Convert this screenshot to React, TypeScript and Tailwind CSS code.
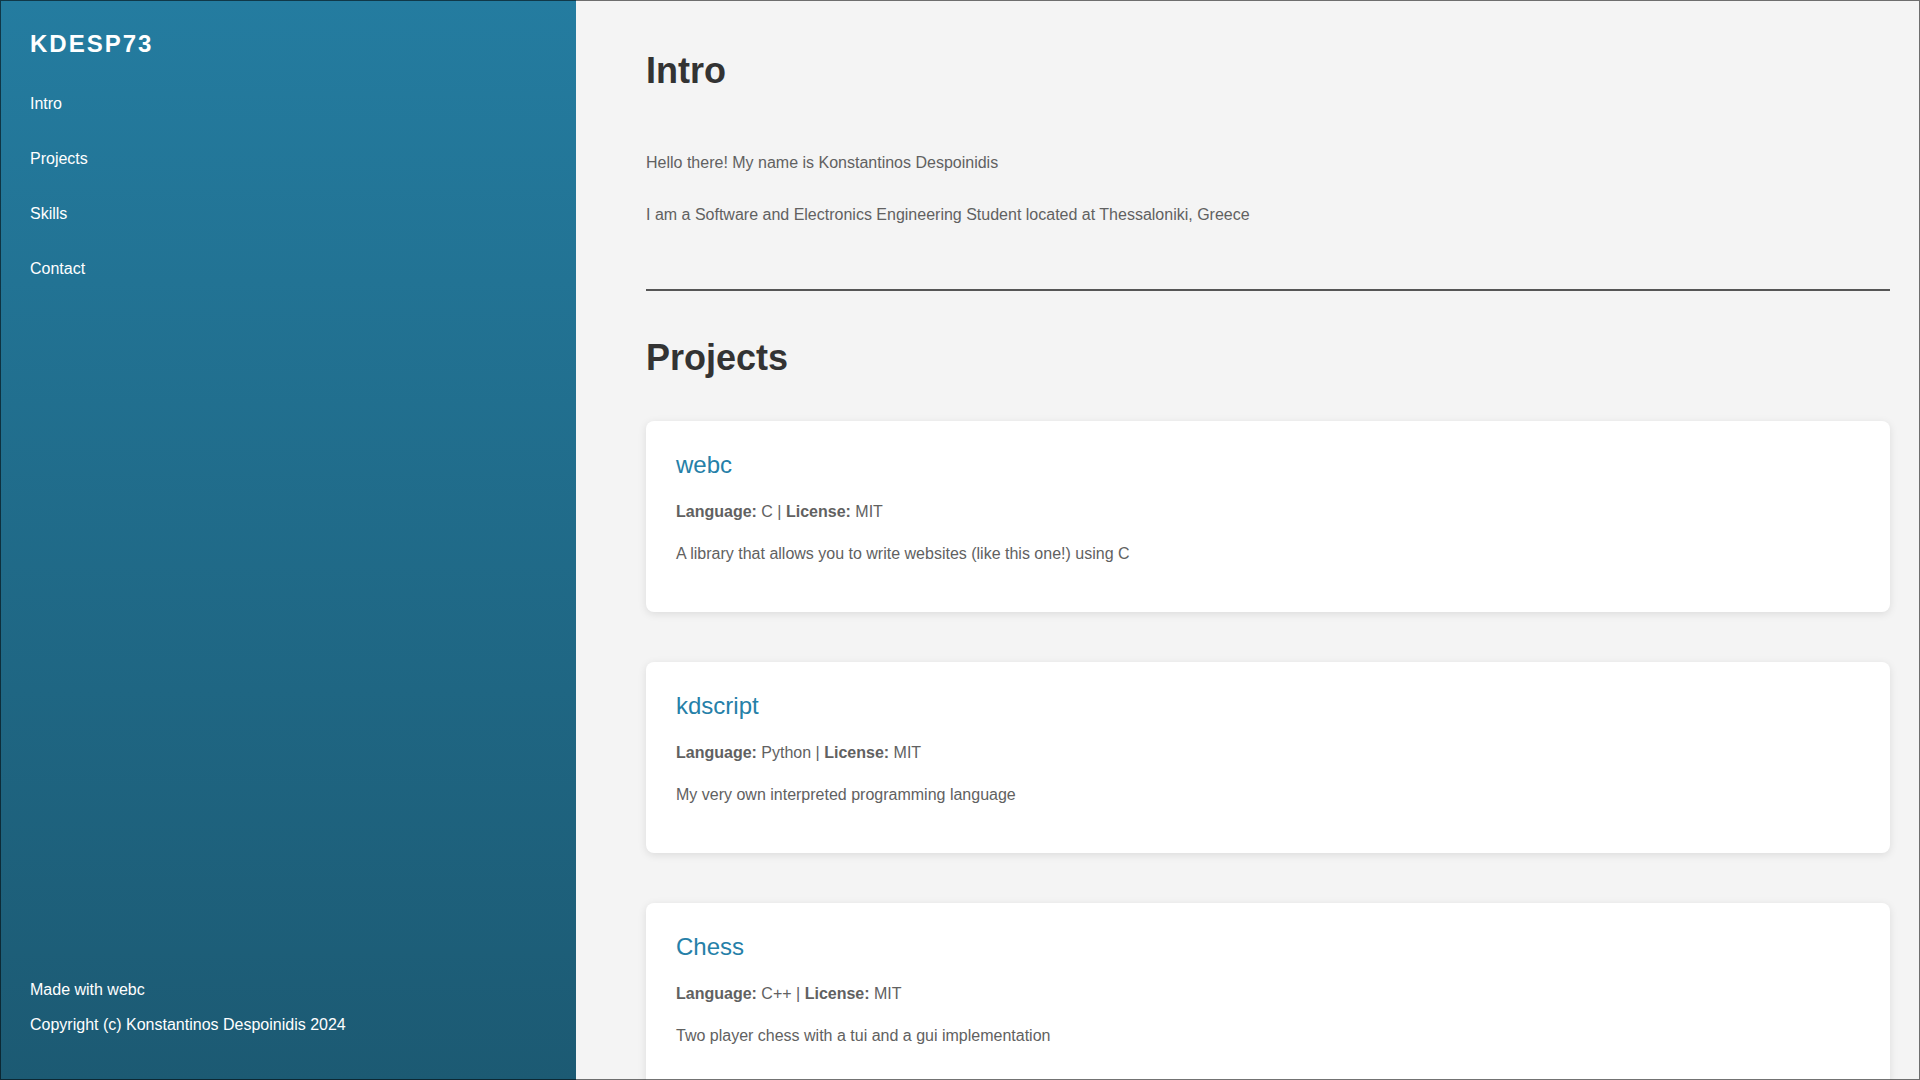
import React from 'react';

type Project = {
  name: string;
  language: string;
  license: string;
  description: string;
};

const projects: Project[] = [
  {
    name: 'webc',
    language: 'C',
    license: 'MIT',
    description: 'A library that allows you to write websites (like this one!) using C',
  },
  {
    name: 'kdscript',
    language: 'Python',
    license: 'MIT',
    description: 'My very own interpreted programming language',
  },
  {
    name: 'Chess',
    language: 'C++',
    license: 'MIT',
    description: 'Two player chess with a tui and a gui implementation',
  },
];

const navLinks = ['Intro', 'Projects', 'Skills', 'Contact'];

const ProjectCard = ({ project }: { project: Project }) => {
  return (
    <div className="mb-[50px] rounded-lg bg-white px-[30px] pt-[29px] pb-[46px] shadow-[0_2px_8px_rgba(0,0,0,0.1)]">
      <h3 className="text-[24px] leading-[29px] text-[#2580a8]">{project.name}</h3>
      <p className="mt-[21px] text-[16px] leading-[24px] text-[#616161]">
        <span className="font-bold">Language:</span> {project.language} |{' '}
        <span className="font-bold">License:</span> {project.license}
      </p>
      <p className="mt-[18px] text-[16px] leading-[24px] text-[#616161]">{project.description}</p>
    </div>
  );
};

const App = () => {
  return (
    <div
      className="relative flex h-[1080px] w-full overflow-hidden bg-[#f4f4f4]"
      style={{ fontFamily: '"Liberation Sans", Arial, sans-serif' }}
    >
      {/* sidebar */}
      <aside className="flex w-[576px] shrink-0 flex-col bg-linear-to-b from-[#247ca0] to-[#1c5a73] px-[30px] pt-[29px] pb-[43px] text-white">
        <div className="text-[24px] leading-[29px] font-bold tracking-[2px]">KDESP73</div>
        <nav className="mt-[34px] flex flex-col gap-[31px]">
          {navLinks.map((link) => (
            <a key={link} href={'#' + link.toLowerCase()} className="text-[16px] leading-[24px] text-white">
              {link}
            </a>
          ))}
        </nav>
        <div className="mt-auto flex flex-col gap-[11px] text-[16px] leading-[24px]">
          <p>Made with webc</p>
          <p>Copyright (c) Konstantinos Despoinidis 2024</p>
        </div>
      </aside>

      {/* content */}
      <main className="min-w-0 flex-1 pt-[49px] pl-[70px] pr-[30px]">
        <section id="intro">
          <h2 className="text-[36px] leading-[43px] font-bold text-[#333]">Intro</h2>
          <p className="mt-[59px] text-[16px] leading-[24px] text-[#616161]">
            Hello there! My name is Konstantinos Despoinidis
          </p>
          <p className="mt-[28px] text-[16px] leading-[24px] text-[#616161]">
            I am a Software and Electronics Engineering Student located at Thessaloniki, Greece
          </p>
        </section>

        <hr className="mt-[62px] border-t-2 border-[#555]" />

        <section id="projects">
          <h2 className="mt-[45px] text-[36px] leading-[43px] font-bold text-[#333]">Projects</h2>
          <div className="mt-[42px]">
            {projects.map((p) => (
              <ProjectCard key={p.name} project={p} />
            ))}
          </div>
        </section>
      </main>

      {/* window frame */}
      <div className="pointer-events-none absolute inset-0 border border-black/55" />
    </div>
  );
};

export default App;
